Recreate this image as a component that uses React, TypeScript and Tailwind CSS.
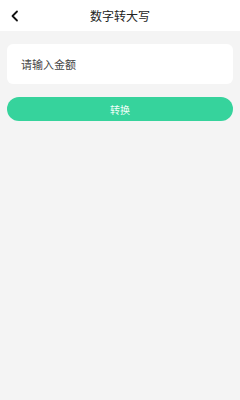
import { useState } from 'react';

export default function App() {
  const [amount, setAmount] = useState('');

  return (
    <div className="w-[240px] h-[400px] bg-[#f4f4f4] flex flex-col" style={{ fontFamily: '"Noto Sans CJK SC", "Noto Sans", sans-serif' }}>
      {/* 헤더 */}
      <div className="h-[31px] bg-white flex items-center relative shrink-0">
        <button className="pl-[10px] pr-2 h-full flex items-center text-[#111]">
          <svg width="10" height="12" viewBox="0 0 10 12" fill="none">
            <path d="M7 1.5L2.5 6L7 10.5" stroke="#111" strokeWidth="1.8" strokeLinecap="round" strokeLinejoin="round" />
          </svg>
        </button>
        <h1 className="absolute left-1/2 -translate-x-1/2 text-[12px] text-[#222] leading-none">数字转大写</h1>
      </div>

      <div className="px-[7px] pt-[13px] flex flex-col gap-[13px]">
        <div className="h-[40px] bg-white rounded-[6px] flex items-center px-[14px]">
          <input
            value={amount}
            onChange={e => setAmount(e.target.value)}
            placeholder="请输入金额"
            className="w-full bg-transparent outline-none text-[11px] text-[#333] placeholder:text-[#444]"
          />
        </div>
        <button className="h-[24px] rounded-full bg-[#36d39c] text-[#f2fff9] text-[10px] flex items-center justify-center">
          转换
        </button>
      </div>
    </div>
  );
}
